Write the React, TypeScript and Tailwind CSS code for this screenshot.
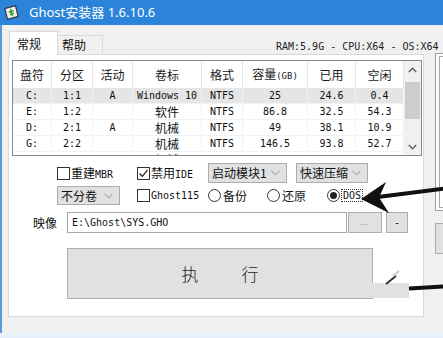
import React from "react";

const CJK = "font-['Noto_Sans_CJK_SC',sans-serif]";
const MONO = "font-['DejaVu_Sans_Mono',monospace]";

function M({ children, className = "" }: { children: React.ReactNode; className?: string }) {
  return <span className={`${MONO} text-[10px] leading-[12px] ${className}`}>{children}</span>;
}
function C({ children, className = "" }: { children: React.ReactNode; className?: string }) {
  return <span className={`${CJK} text-[12px] leading-[14px] ${className}`}>{children}</span>;
}

function CheckBox({ checked }: { checked?: boolean }) {
  return (
    <span className="w-[13px] h-[13px] border border-[#333] bg-white flex items-center justify-center shrink-0">
      {checked && (
        <svg width="11" height="11" viewBox="0 0 11 11">
          <path d="M1.5 5.5 L4.3 8.3 L9.5 2.2" fill="none" stroke="#222" strokeWidth="1.3" />
        </svg>
      )}
    </span>
  );
}

function Radio({ checked }: { checked?: boolean }) {
  return (
    <span className="w-[13px] h-[13px] rounded-full border border-[#333] bg-white flex items-center justify-center shrink-0">
      {checked && <span className="w-[7px] h-[7px] rounded-full bg-[#222]" />}
    </span>
  );
}

function Chevron() {
  return (
    <svg width="9" height="6" viewBox="0 0 9 6" className="shrink-0">
      <polyline points="0.5,0.8 4.5,4.8 8.5,0.8" fill="none" stroke="#8a8a8a" strokeWidth="1" />
    </svg>
  );
}

function Select({ className, children }: { className: string; children: React.ReactNode }) {
  return (
    <div className={`${className} h-full bg-[#e1e1e1] border border-[#adadad] flex items-center justify-between pl-[3px] pr-[6px] shrink-0`}>
      <span className="flex items-baseline text-[#111]">{children}</span>
      <Chevron />
    </div>
  );
}

const rows: string[][] = [
  ["C:", "1:1", "A", "Windows 10", "NTFS", "25", "24.6", "0.4"],
  ["E:", "1:2", "", "软件", "NTFS", "86.8", "32.5", "54.3"],
  ["D:", "2:1", "A", "机械", "NTFS", "49", "38.1", "10.9"],
  ["G:", "2:2", "", "机械", "NTFS", "146.5", "93.8", "52.7"],
  ["", "", "", "机械", "", "", "", ""],
];

const isCJK = (s: string) => /[\u4e00-\u9fff]/.test(s);

function Table() {
  const headers = ["盘符", "分区", "活动", "卷标", "格式", "容量", "已用", "空闲"];
  return (
    <div className="ml-[3px] mt-[5px] w-[410px] h-[96px] border border-[#828790] bg-white flex shrink-0">
      <div className="w-[391px] h-full overflow-hidden flex flex-col">
        <div className="grid grid-cols-[39px_41px_40px_69px_41px_65px_48px_48px] h-[27px] shrink-0">
          {headers.map((h, i) => (
            <div key={i} className="border-r border-[#e5e5e5] flex items-center justify-center text-[#1a1a1a]">
              <span className="flex items-baseline">
                <C>{h}</C>
                {i === 5 && <span className={`${MONO} text-[9px] leading-[12px]`}>(GB)</span>}
              </span>
            </div>
          ))}
        </div>
        {rows.map((r, ri) => (
          <div
            key={ri}
            className={`grid grid-cols-[39px_41px_40px_69px_41px_65px_48px_48px] h-[16px] shrink-0 ${ri === 0 ? "bg-[#e5e5e5]" : ""}`}
          >
            {r.map((c, ci) => (
              <div key={ci} className="border-r border-b border-[#f2f2f2] flex items-center justify-center text-[#111]">
                {c === "" ? null : isCJK(c) ? <C>{c}</C> : <M className="whitespace-pre">{c}</M>}
              </div>
            ))}
          </div>
        ))}
      </div>
      <div className="w-[17px] h-full bg-[#f0f0f0] flex flex-col shrink-0">
        <div className="h-[17px] flex items-center justify-center shrink-0">
          <svg width="9" height="6" viewBox="0 0 9 6">
            <polyline points="0.8,5 4.5,1.2 8.2,5" fill="none" stroke="#606060" strokeWidth="1.4" />
          </svg>
        </div>
        <div className="h-[4px] shrink-0" />
        <div className="h-[37px] mx-px bg-[#cdcdcd] shrink-0" />
        <div className="flex-1" />
        <div className="h-[17px] flex items-center justify-center shrink-0">
          <svg width="9" height="6" viewBox="0 0 9 6">
            <polyline points="0.8,1 4.5,4.8 8.2,1" fill="none" stroke="#606060" strokeWidth="1.4" />
          </svg>
        </div>
      </div>
    </div>
  );
}

function Panel() {
  return (
    <div className="ml-[6px] w-[416px] h-[263px] border border-[#d9d9d9] bg-white flex flex-col shrink-0">
      <Table />
      {/* row 1 */}
      <div className="mt-[7px] h-[20px] pl-[48px] flex items-center shrink-0">
        <div className="w-[80px] flex items-center gap-[1px] shrink-0">
          <CheckBox />
          <span className="flex items-baseline text-[#111]">
            <C>重建</C>
            <M>MBR</M>
          </span>
        </div>
        <div className="w-[71px] flex items-center gap-[1px] shrink-0">
          <CheckBox checked />
          <span className="flex items-baseline text-[#111]">
            <C>禁用</C>
            <M>IDE</M>
          </span>
        </div>
        <Select className="w-[79px]">
          <C>启动模块1</C>
        </Select>
        <div className="w-[9px] shrink-0" />
        <Select className="w-[72px]">
          <C>快速压缩</C>
        </Select>
      </div>
      {/* row 2 */}
      <div className="mt-[3px] h-[19px] pl-[48px] flex items-center shrink-0">
        <Select className="w-[63px]">
          <C>不分卷</C>
        </Select>
        <div className="w-[17px] shrink-0" />
        <div className="w-[71px] flex items-center gap-[1px] shrink-0">
          <CheckBox />
          <M className="text-[#111]">Ghost115</M>
        </div>
        <div className="w-[59px] flex items-center gap-[2px] shrink-0">
          <Radio />
          <C className="text-[#111]">备份</C>
        </div>
        <div className="w-[60px] flex items-center gap-[2px] shrink-0">
          <Radio />
          <C className="text-[#111]">还原</C>
        </div>
        <div className="flex items-center gap-[1px] shrink-0">
          <Radio checked />
          <span className="border border-dotted border-[#333] px-px h-[13px] flex items-center">
            <M className="text-[#111]">DOS</M>
          </span>
        </div>
      </div>
      {/* row 3 */}
      <div className="mt-[7px] h-[21px] pl-[24px] flex items-center shrink-0">
        <C className="w-[34px] text-[#111] shrink-0">映像</C>
        <div className="w-[280px] h-full border border-[#a8a8a8] bg-white flex items-center pl-[4px] shrink-0">
          <M className="text-[#111]">{"E:\\Ghost\\SYS.GHO"}</M>
        </div>
        <div className="ml-[1px] w-[34px] h-full bg-[#e1e1e1] border border-[#adadad] flex items-center justify-center shrink-0">
          <span className="text-[8px] leading-none text-[#666] font-['Liberation_Sans',sans-serif] tracking-[1px]">...</span>
        </div>
        <div className="ml-[4px] w-[22px] h-full bg-[#e1e1e1] border border-[#adadad] flex items-center justify-center shrink-0">
          <M className="text-[#111]">-</M>
        </div>
      </div>
      {/* execute */}
      <div className="mt-[15px] ml-[58px] w-[306px] h-[51px] bg-[#e1e1e1] border border-[#adadad] flex items-center justify-center gap-[43px] shrink-0">
        <span className={`${CJK} text-[17px] leading-none font-light text-[#222]`}>执</span>
        <span className={`${CJK} text-[17px] leading-none font-light text-[#222]`}>行</span>
      </div>
    </div>
  );
}

export default function App() {
  return (
    <div className="w-[443px] h-[338px] overflow-hidden relative bg-[#f0f0f0] flex flex-col">
      {/* title bar */}
      <div className="h-[25px] bg-[#2b84d9] flex items-center shrink-0">
        <svg width="15" height="15" viewBox="0 0 15 15" className="ml-[4px] shrink-0">
          <g transform="rotate(-14 7.5 7.5)">
            <rect x="2" y="2" width="11" height="11" fill="#eef3ea" stroke="#2a3a48" strokeWidth="1.2" />
            <path d="M7.5 4 L7.5 11 M5 6.5 L10 6.5 M5.5 9 L9.5 9" stroke="#3c9a3c" strokeWidth="1.6" />
          </g>
        </svg>
        <span className="ml-[10px] text-white text-[13px] leading-none font-['Noto_Sans','Noto_Sans_CJK_SC',sans-serif]">
          Ghost安装器 1.6.10.6
        </span>
      </div>
      <div className="flex flex-1 min-h-0">
        <div className="w-[2px] bg-[#5c9ad8] shrink-0" />
        <div className="flex-1 min-w-0 flex flex-col">
          {/* tabs + status */}
          <div className="h-[29px] flex items-end shrink-0">
            <div className="ml-[7px] relative z-10 -mb-px w-[49px] h-[24px] bg-white border border-b-0 border-[#d9d9d9] flex items-center pl-[7px] shrink-0">
              <C className="text-[#111]">常规</C>
            </div>
            <div className="w-[45px] h-[19px] bg-[#f0f0f0] border-t border-r border-[#d9d9d9] flex items-center pl-[4px] shrink-0">
              <C className="text-[#111]">帮助</C>
            </div>
            <div className="self-start mt-[7px] ml-[173px] whitespace-nowrap shrink-0 text-[#222]">
              <M>{"RAM:5.9G - CPU:X64 - OS:X64 '"}</M>
            </div>
          </div>
          <div className="flex shrink-0">
            <Panel />
            <div className="ml-[11px] -mt-px flex flex-col shrink-0">
              <div className="w-[10px] h-[158px] border-l border-t border-b border-[#a0a0a0] bg-[#fbfbfb] pl-[3px] py-[2px]">
                <div className="h-full border-l border-t border-b border-[#a8a8a8] bg-white" />
              </div>
              <div className="mt-[12px] w-[10px] h-[31px] bg-[#e1e1e1] border-l border-t border-b border-[#adadad]" />
            </div>
          </div>
        </div>
      </div>
      <div className="h-[5px] bg-[#e6f1fb] shrink-0" />

      {/* overlay artifacts & annotation arrows */}
      <div className="absolute left-[372px] top-[283px] w-[37px] h-[15px] bg-[#e1e1e1]" />
      <svg className="absolute left-0 top-0 pointer-events-none" width="443" height="338" viewBox="0 0 443 338">
        <line x1="445" y1="188.5" x2="374" y2="197.5" stroke="#111" strokeWidth="4" />
        <polygon points="361,199 386,182 379,197.5 389,213" fill="#111" />
        <line x1="409" y1="288.5" x2="445" y2="286.5" stroke="#111" strokeWidth="4" />
        <line x1="386" y1="284" x2="396" y2="276" stroke="#333" strokeWidth="2" />
        <line x1="393" y1="276" x2="399" y2="271" stroke="#c8c8c8" strokeWidth="2" />
      </svg>
    </div>
  );
}
